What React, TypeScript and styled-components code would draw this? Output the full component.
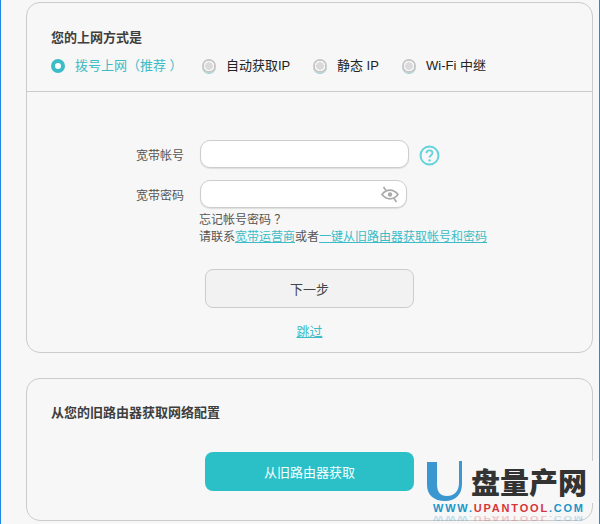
import React from "react";
import styled, { createGlobalStyle } from "styled-components";

const Global = createGlobalStyle`
  html, body {
    margin: 0;
    padding: 0;
    background: #f7f7f7;
    overflow: hidden;
  }
  * {
    box-sizing: border-box;
  }
`;

const Page = styled.div`
  position: relative;
  width: 600px;
  height: 524px;
  overflow: hidden;
  display: flex;
  flex-direction: column;
  gap: 25px;
  padding: 2px 7px 2px 26px;
  background: #f7f7f7;
  border-left: 1px solid #1e88e5;
  border-right: 1px solid #2f86c9;
  font-family: "Liberation Sans", "Noto Sans CJK SC", sans-serif;
  font-size: 12px;
  color: #444;
`;

const Card = styled.section<{ $height: number }>`
  height: ${(p) => p.$height}px;
  flex: 0 0 auto;
  margin: 0 -1px;
  border: 1px solid #cbcbcb;
  border-radius: 14px;
  background: #f7f7f7;
`;

const Head = styled.div`
  padding: 26px 24px 0;
  height: 89px;
  border-bottom: 1px solid #cbcbcb;
`;

const Title = styled.h2`
  margin: 0;
  font-size: 13px;
  line-height: 18px;
  font-weight: 700;
  color: #3e3e3e;
`;

const Modes = styled.div`
  display: flex;
  margin-top: 10px;
  height: 18px;
  align-items: center;
`;

const Mode = styled.label<{ $width: number; $active?: boolean }>`
  display: flex;
  align-items: center;
  gap: 10px;
  width: ${(p) => p.$width}px;
  font-size: 13px;
  line-height: 18px;
  color: ${(p) => (p.$active ? "#3cbcc6" : "#222")};
  white-space: pre;
`;

const Radio = styled.span<{ $active?: boolean }>`
  flex: 0 0 14px;
  width: 14px;
  height: 14px;
  border-radius: 50%;
  background: ${(p) =>
    p.$active
      ? "#fff"
      : "radial-gradient(circle, #dadada 0 3.5px, #f5f5f5 4px 5px, #c6c6c6 5.5px)"};
  border: ${(p) => (p.$active ? "4px solid #3cbcc6" : "none")};
  box-shadow: ${(p) => (p.$active ? "none" : "0 1px 0 #9bd3d6")};
`;

const Form = styled.div`
  display: flex;
  flex-direction: column;
  padding: 48px 0 0 109px;
`;

const Row = styled.div`
  display: flex;
  align-items: center;
  margin-bottom: 12px;
  height: 28px;
`;

const Label = styled.span`
  flex: 0 0 64px;
  width: 64px;
  white-space: nowrap;
  font-size: 12px;
  color: #555;
`;

const Field = styled.div<{ $width: number }>`
  position: relative;
  width: ${(p) => p.$width}px;
  height: 28px;
  background: #fff;
  border: 1px solid #cdcdcd;
  border-radius: 10px;
  box-shadow: 0 1px 1px #dedede;
`;

const EyeSlot = styled.span`
  position: absolute;
  right: 7px;
  top: 5px;
  display: flex;
`;

const Help = styled.span`
  display: flex;
  margin: 2px 0 0 10px;
`;

const Hint = styled.div`
  margin: -8px 0 0 63px;
  font-size: 12px;
  line-height: 17px;
  color: #555;
  white-space: nowrap;
`;

const TextLink = styled.a`
  color: #3cbcc6;
  text-decoration: underline;
`;

const Action = styled.div<{ $primary?: boolean }>`
  width: 209px;
  height: 39px;
  display: flex;
  align-items: center;
  justify-content: center;
  border-radius: 8px;
  font-size: 13px;
  background: ${(p) => (p.$primary ? "#2bc0c8" : "#f2f2f2")};
  color: ${(p) => (p.$primary ? "#f4ffff" : "#444")};
  border: ${(p) => (p.$primary ? "none" : "1px solid #cccccc")};
`;

const Actions = styled.div<{ $top: number }>`
  display: flex;
  flex-direction: column;
  align-items: center;
  width: 209px;
  margin: ${(p) => p.$top}px 0 0 178px;
`;

const Skip = styled(TextLink)`
  margin-top: 15px;
  font-size: 13px;
  line-height: 18px;
`;

const CardTitle = styled(Title)`
  padding: 25px 24px 0;
`;

const Watermark = styled.div`
  position: absolute;
  left: 425px;
  top: 461px;
  width: 175px;
  height: 63px;
`;

const WatermarkTop = styled.div`
  display: flex;
  align-items: flex-start;
  height: 42px;
  background: #f7f7f7;
`;

const Brand = styled.span`
  margin: 3px 0 0 7px;
  font-family: "Noto Sans CJK SC", sans-serif;
  font-weight: 900;
  font-size: 29px;
  line-height: 34px;
  color: #333;
  white-space: nowrap;
`;

const Url = styled.div`
  margin: 0 0 0 7px;
  font-family: "Liberation Sans", sans-serif;
  font-size: 11px;
  font-weight: 700;
  line-height: 10px;
  letter-spacing: 1.8px;
  color: #1b95c9;
  white-space: nowrap;
`;

const UrlRed = styled.span`
  color: #d8343a;
`;

const Reflection = styled(Url)`
  margin-top: 1px;
  transform: scaleY(-0.7);
  opacity: 0.25;
`;

function HelpIcon() {
  return (
    <svg width="21" height="21" viewBox="0 0 21 21" fill="none">
      <circle cx="10.5" cy="10.5" r="9" stroke="#62d2dc" strokeWidth="2" />
      <path
        d="M7.5 8.2c0-1.8 1.4-2.8 3-2.8s3 1 3 2.6c0 2.2-3 2.2-3 4.6"
        stroke="#62d2dc"
        strokeWidth="1.8"
      />
      <circle cx="10.5" cy="15.4" r="1.2" fill="#62d2dc" />
    </svg>
  );
}

function EyeOff() {
  return (
    <svg width="18" height="17" viewBox="0 0 18 17" fill="none">
      <path
        d="M1 8.5C3.5 5.5 6 4.2 9 4.2s5.500 1.300 8 4.300c-2.500 3-5 4.300-8 4.300s-5.500-1.300-8-4.300z"
        stroke="#aaa"
        strokeWidth="1.700"
      />
      <circle cx="9" cy="8.500" r="2.200" fill="#aaa" />
      <path d="M2.500 1l2.500 3.500M13 12.500l2.500 3.500" stroke="#aaa" strokeWidth="1.700" />
    </svg>
  );
}

function LogoU() {
  return (
    <svg width="38" height="40" viewBox="0 0 38 40">
      <path
        d="M1 1h10v22c0 8 3 12 10 12 8 0 12-6 12-13V0h3v23c0 10-6 17-17 17S1 34 1 24z"
        fill="#3b97cf"
      />
    </svg>
  );
}

export default function App() {
  return (
    <Page>
      <Global />
      <Card $height={351}>
        <Head>
          <Title>您的上网方式是</Title>
          <Modes>
            <Mode $width={151} $active>
              <Radio $active />
              拨号上网（推荐 ）
            </Mode>
            <Mode $width={111}>
              <Radio />
              自动获取IP
            </Mode>
            <Mode $width={89}>
              <Radio />
              静态 IP
            </Mode>
            <Mode $width={100}>
              <Radio />
              Wi-Fi 中继
            </Mode>
          </Modes>
        </Head>
        <Form>
          <Row>
            <Label>宽带帐号</Label>
            <Field $width={209} />
            <Help>
              <HelpIcon />
            </Help>
          </Row>
          <Row>
            <Label>宽带密码</Label>
            <Field $width={207}>
              <EyeSlot>
                <EyeOff />
              </EyeSlot>
            </Field>
          </Row>
          <Hint>
            忘记帐号密码 ？
            <br />
            请联系<TextLink>宽带运营商</TextLink>或者
            <TextLink>一键从旧路由器获取帐号和密码</TextLink>
          </Hint>
        </Form>
        <Actions $top={23}>
          <Action>下一步</Action>
          <Skip>跳过</Skip>
        </Actions>
      </Card>
      <Card $height={143}>
        <CardTitle>从您的旧路由器获取网络配置</CardTitle>
        <Actions $top={30}>
          <Action $primary>从旧路由器获取</Action>
        </Actions>
      </Card>
      <Watermark>
        <WatermarkTop>
          <LogoU />
          <Brand>盘量产网</Brand>
        </WatermarkTop>
        <Url>
          WWW.<UrlRed>UPANTOOL</UrlRed>.COM
        </Url>
        <Reflection>
          WWW.<UrlRed>UPANTOOL</UrlRed>.COM
        </Reflection>
      </Watermark>
    </Page>
  );
}
